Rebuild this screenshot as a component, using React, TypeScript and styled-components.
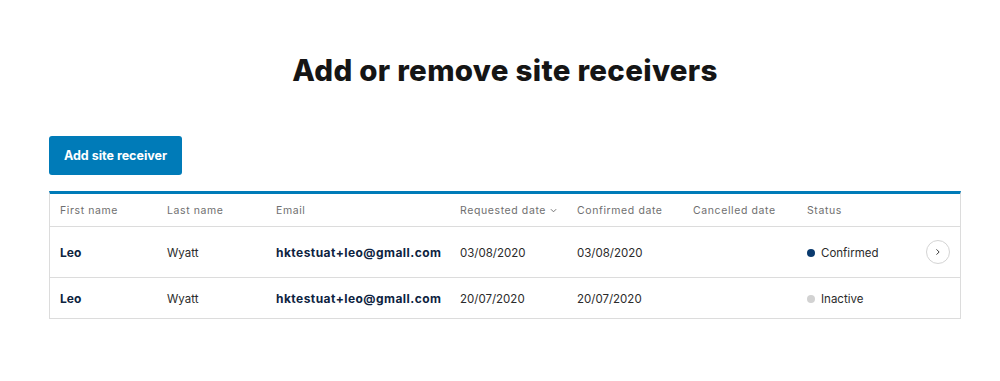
import React from "react";
import styled, { createGlobalStyle } from "styled-components";

const GlobalStyle = createGlobalStyle`
  body {
    margin: 0;
    background: #ffffff;
    font-family: "Inter", "Noto Sans", sans-serif;
    color: #1b1b1b;
  }
`;

interface IReceiver {
  firstName: string;
  lastName: string;
  email: string;
  requested: string;
  confirmed: string;
  cancelled: string;
  status: "Confirmed" | "Inactive";
}

const receivers: IReceiver[] = [
  {
    firstName: "Leo",
    lastName: "Wyatt",
    email: "hktestuat+leo@gmall.com",
    requested: "03/08/2020",
    confirmed: "03/08/2020",
    cancelled: "",
    status: "Confirmed",
  },
  {
    firstName: "Leo",
    lastName: "Wyatt",
    email: "hktestuat+leo@gmall.com",
    requested: "20/07/2020",
    confirmed: "20/07/2020",
    cancelled: "",
    status: "Inactive",
  },
];

const App = () => {
  return (
    <>
      <GlobalStyle />
      <Page>
        <Title>Add or remove site receivers</Title>
        <AddButton>Add site receiver</AddButton>
        <Table>
          <HeaderRow>
            <HeadCell>First name</HeadCell>
            <HeadCell>Last name</HeadCell>
            <HeadCell>Email</HeadCell>
            <HeadCell>
              Requested date
              <Chevron viewBox="0 0 8 5" width="7" height="5">
                <path d="M1 1l3 3 3-3" fill="none" stroke="#6f6f6f" strokeWidth="1.1" />
              </Chevron>
            </HeadCell>
            <HeadCell>Confirmed date</HeadCell>
            <HeadCell>Cancelled date</HeadCell>
            <HeadCell>Status</HeadCell>
            <HeadCell />
          </HeaderRow>
          {receivers.map((r, idx) => (
            <Row key={idx} tall={idx === 0}>
              <NameCell>{r.firstName}</NameCell>
              <Cell>{r.lastName}</Cell>
              <EmailCell>{r.email}</EmailCell>
              <Cell>{r.requested}</Cell>
              <Cell>{r.confirmed}</Cell>
              <Cell>{r.cancelled}</Cell>
              <Cell>
                <Dot active={r.status === "Confirmed"} />
                {r.status}
              </Cell>
              <ActionCell>
                {idx === 0 && (
                  <RoundButton>
                    <svg viewBox="0 0 8 10" width="6" height="8">
                      <path d="M2 1.5l3.5 3.5L2 8.5" fill="none" stroke="#333" strokeWidth="1.3" />
                    </svg>
                  </RoundButton>
                )}
              </ActionCell>
            </Row>
          ))}
        </Table>
      </Page>
    </>
  );
};

export default App;

const Page = styled.div`
  padding: 0 39px 0 49px;
  display: flex;
  flex-direction: column;
`;

const Title = styled.h1`
  margin: 51px 0 0;
  text-align: center;
  font-size: 29.5px;
  font-weight: 800;
  letter-spacing: 0.3px;
  color: #151515;
  line-height: 38px;
`;

const AddButton = styled.button`
  align-self: flex-start;
  margin-top: 47px;
  width: 133px;
  height: 39px;
  border: none;
  border-radius: 3px;
  background: #007bb8;
  color: #ffffff;
  font-family: inherit;
  font-size: 12.5px;
  font-weight: 700;
  cursor: pointer;
`;

const Table = styled.div`
  margin-top: 16px;
  width: 912px;
  border-top: 3px solid #007bb8;
  border-left: 1px solid #dcdcdc;
  border-right: 1px solid #dcdcdc;
  box-sizing: border-box;
`;

const columns = "107px 109px 184px 117px 116px 114px 119px 1fr";

const HeaderRow = styled.div`
  display: grid;
  grid-template-columns: ${columns};
  padding-left: 10px;
  height: 32px;
  align-items: center;
  border-bottom: 1px solid #dcdcdc;
`;

const HeadCell = styled.div`
  font-size: 10.5px;
  color: #6f6f6f;
  letter-spacing: 0.6px;
  display: flex;
  align-items: center;
`;

const Chevron = styled.svg`
  margin-left: 4px;
`;

const Row = styled.div<{ tall: boolean }>`
  display: grid;
  grid-template-columns: ${columns};
  padding-left: 10px;
  height: ${(props) => (props.tall ? "50px" : "40px")};
  align-items: center;
  border-bottom: 1px solid #dcdcdc;
`;

const Cell = styled.div`
  font-size: 11.5px;
  color: #2b2b2b;
  display: flex;
  align-items: center;
  padding-top: 1px;
`;

const NameCell = styled(Cell)`
  font-weight: 700;
  color: #0d2340;
  font-size: 12px;
`;

const EmailCell = styled(Cell)`
  font-weight: 700;
  color: #0d2340;
  font-size: 12px;
  letter-spacing: 0.45px;
`;

const Dot = styled.span<{ active: boolean }>`
  width: 8px;
  height: 8px;
  border-radius: 50%;
  margin-right: 6px;
  background: ${(props) => (props.active ? "#0a3a6e" : "#d2d2d2")};
`;

const ActionCell = styled.div`
  display: flex;
  align-items: center;
`;

const RoundButton = styled.button`
  width: 24px;
  height: 24px;
  border-radius: 50%;
  border: 1px solid #d4d4d4;
  background: #ffffff;
  display: flex;
  align-items: center;
  justify-content: center;
  padding: 0;
  cursor: pointer;
`;
